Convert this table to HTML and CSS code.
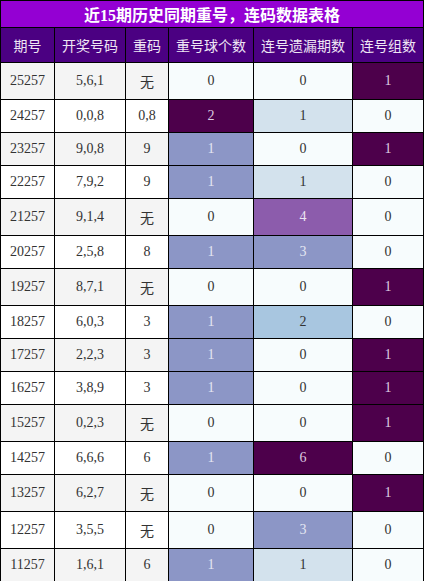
FILE: index.html
```html
<!DOCTYPE html>
<html lang="zh">
<head>
    <meta charset="UTF-8">
    <meta name="viewport" content="width=device-width, initial-scale=1.0">
    <title>近15期历史同期重号，连码数据表格</title>
    <link rel="stylesheet" href="styles.css">
</head>
<body>
    <table class="data-table">
        <colgroup>
            <col class="c-issue">
            <col class="c-draw">
            <col class="c-repeat">
            <col class="c-count">
            <col class="c-miss">
            <col class="c-group">
        </colgroup>
        <thead>
            <tr>
                <th class="title" colspan="6">近15期历史同期重号，连码数据表格</th>
            </tr>
            <tr class="head">
                <th>期号</th>
                <th>开奖号码</th>
                <th>重码</th>
                <th>重号球个数</th>
                <th>连号遗漏期数</th>
                <th>连号组数</th>
            </tr>
        </thead>
        <tbody>
            <tr><td>25257</td><td>5,6,1</td><td>无</td><td class="v0">0</td><td class="v0">0</td><td class="v6">1</td></tr>
            <tr><td>24257</td><td>0,0,8</td><td>0,8</td><td class="v6">2</td><td class="v1">1</td><td class="v0">0</td></tr>
            <tr><td>23257</td><td>9,0,8</td><td>9</td><td class="v3">1</td><td class="v0">0</td><td class="v6">1</td></tr>
            <tr><td>22257</td><td>7,9,2</td><td>9</td><td class="v3">1</td><td class="v1">1</td><td class="v0">0</td></tr>
            <tr><td>21257</td><td>9,1,4</td><td>无</td><td class="v0">0</td><td class="v4">4</td><td class="v0">0</td></tr>
            <tr><td>20257</td><td>2,5,8</td><td>8</td><td class="v3">1</td><td class="v3">3</td><td class="v0">0</td></tr>
            <tr><td>19257</td><td>8,7,1</td><td>无</td><td class="v0">0</td><td class="v0">0</td><td class="v6">1</td></tr>
            <tr><td>18257</td><td>6,0,3</td><td>3</td><td class="v3">1</td><td class="v2">2</td><td class="v0">0</td></tr>
            <tr><td>17257</td><td>2,2,3</td><td>3</td><td class="v3">1</td><td class="v0">0</td><td class="v6">1</td></tr>
            <tr><td>16257</td><td>3,8,9</td><td>3</td><td class="v3">1</td><td class="v0">0</td><td class="v6">1</td></tr>
            <tr><td>15257</td><td>0,2,3</td><td>无</td><td class="v0">0</td><td class="v0">0</td><td class="v6">1</td></tr>
            <tr><td>14257</td><td>6,6,6</td><td>6</td><td class="v3">1</td><td class="v6">6</td><td class="v0">0</td></tr>
            <tr><td>13257</td><td>6,2,7</td><td>无</td><td class="v0">0</td><td class="v0">0</td><td class="v6">1</td></tr>
            <tr><td>12257</td><td>3,5,5</td><td>无</td><td class="v0">0</td><td class="v3">3</td><td class="v0">0</td></tr>
            <tr><td>11257</td><td>1,6,1</td><td>6</td><td class="v3">1</td><td class="v1">1</td><td class="v0">0</td></tr>
        </tbody>
    </table>
</body>
</html>
```

FILE: styles.css
```css
* {
    margin: 0;
    padding: 0;
    box-sizing: border-box;
}

body {
    font-family: "Liberation Serif", "Noto Sans CJK SC", serif;
    background-color: #fff;
}

.data-table {
    width: 424px;
    border-collapse: collapse;
    table-layout: fixed;
    font-size: 14px;
    color: #333;
    text-align: center;
}

.c-issue { width: 54px; }
.c-draw { width: 71px; }
.c-repeat { width: 43px; }
.c-count { width: 85px; }
.c-miss { width: 99px; }
.c-group { width: 71px; }

.data-table th,
.data-table td {
    border: 1px solid #000;
}

/* Title and header */
.data-table .title {
    background-color: #9400d3;
    color: #fff;
    font-size: 16px;
    font-weight: bold;
    padding: 1px 0;
}

.head th {
    background-color: #4b0082;
    color: #eee6f4;
    font-weight: normal;
    font-family: "Noto Sans CJK SC", sans-serif;
    padding: 7px 0;
}

/* Body rows, striped */
.data-table td {
    padding: 8px 0;
}

.data-table tbody tr:nth-child(odd) {
    background-color: #f4f4f4;
}

.data-table tbody tr:nth-child(even) {
    background-color: #fff;
}

/* Value colour scale */
.v0 { background-color: #f7fcfd; }
.v1 { background-color: #d3e2ed; }
.v2 { background-color: #a8c6e0; }
.v3 { background-color: #8c96c6; color: #e4e6f2; }
.v4 { background-color: #8c5cac; color: #ece4f2; }
.v6 { background-color: #4d004b; color: #dccbe0; }
```
